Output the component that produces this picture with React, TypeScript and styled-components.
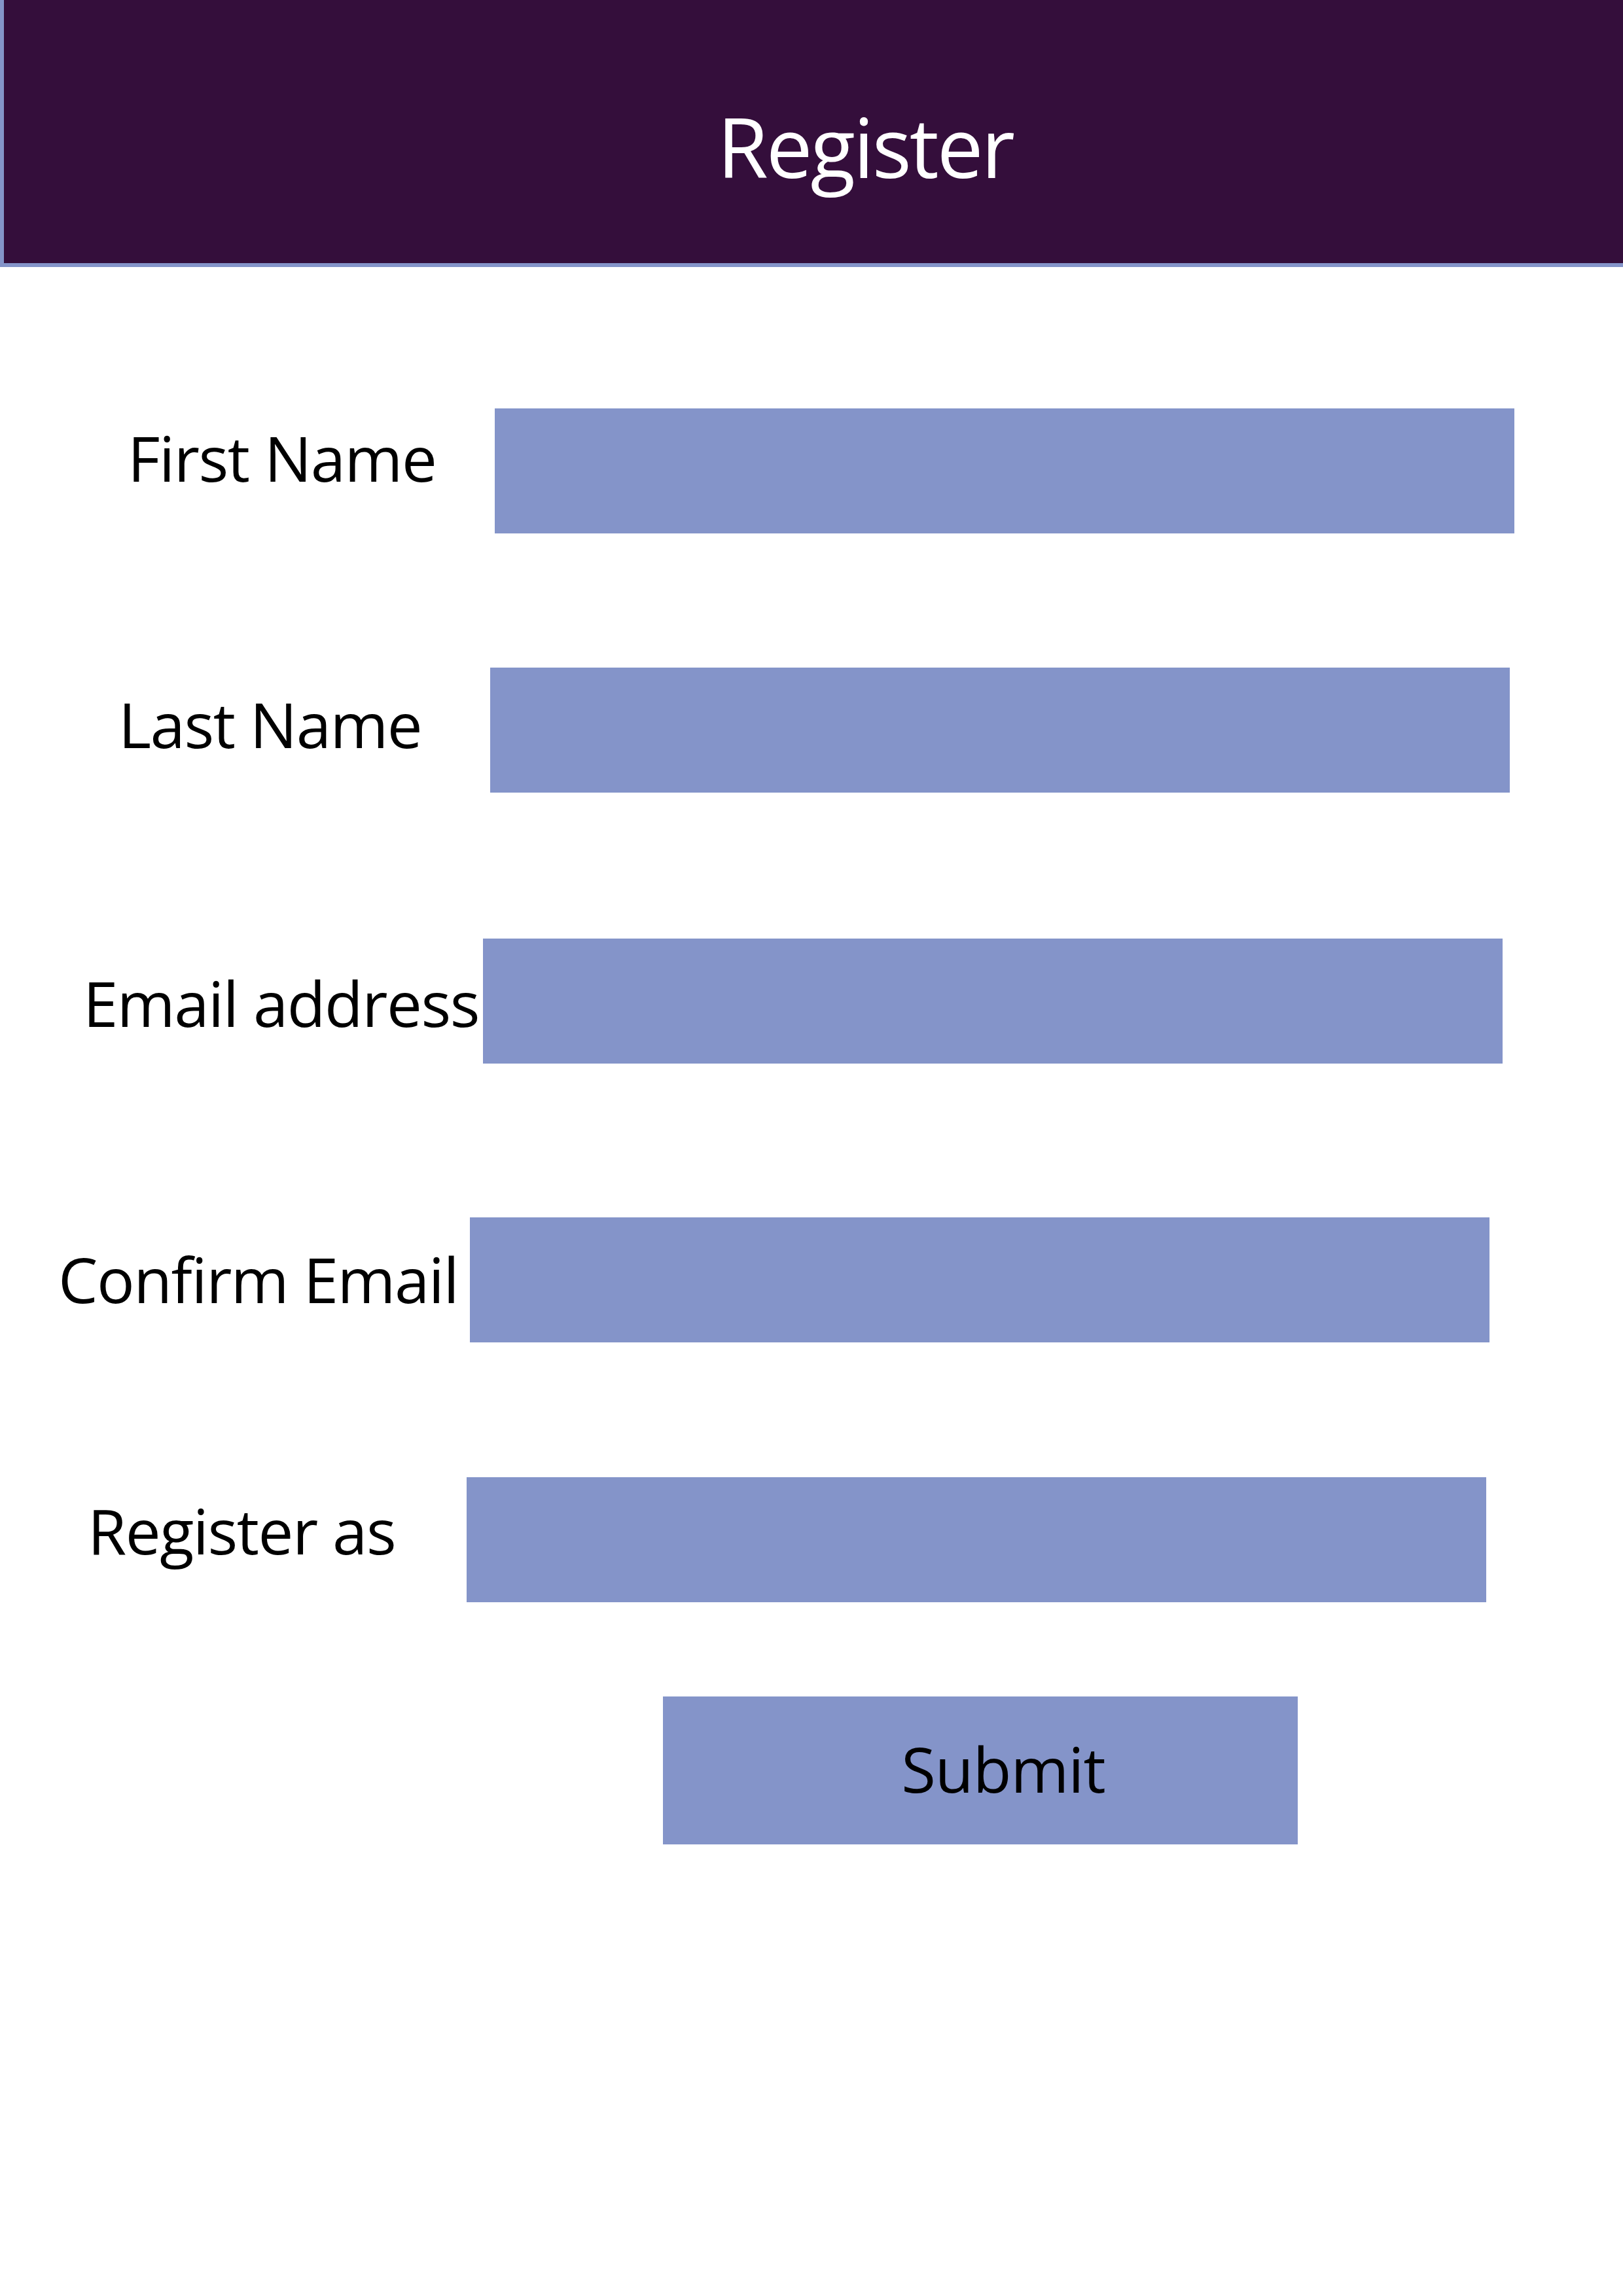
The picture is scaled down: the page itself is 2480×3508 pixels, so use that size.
import styled, { createGlobalStyle } from 'styled-components'

const GlobalStyle = createGlobalStyle`
  html, body {
    margin: 0;
    padding: 0;
    background: #ffffff;
  }

  body {
    width: 2480px;
    min-height: 3508px;
    font-family: 'Open Sans', 'Noto Sans', sans-serif;
  }
`

interface RowProps {
  top: number
  fieldX: number
  labelX: number
  shift: number
}

const Header = styled.header`
  display: flex;
  align-items: center;
  justify-content: center;
  box-sizing: border-box;
  height: 408px;
  padding: 44px 0 0 158px;
  background-color: #340e3b;
  border-left: 6px solid #8494c9;
  border-bottom: 6px solid #8494c9;

  h1 {
    margin: 0;
    font-size: 126px;
    font-weight: 400;
    color: #ffffff;
    letter-spacing: -3px;
  }
`

const Form = styled.form`
  display: flex;
  flex-direction: column;
`

const Row = styled.div<RowProps>`
  display: grid;
  grid-template-columns: ${({ fieldX }) => fieldX}px 1558px;
  align-items: center;
  margin-top: ${({ top }) => top}px;

  label {
    padding-left: ${({ labelX }) => labelX}px;
    margin-top: ${({ shift }) => shift}px;
    font-size: 96px;
    line-height: 1;
    color: #000000;
    white-space: nowrap;
    letter-spacing: -1.5px;
  }
`

const Field = styled.input`
  box-sizing: border-box;
  height: 191px;
  width: 100%;
  margin: 0;
  padding: 0 30px;
  border: 0;
  background-color: #8494c9;
  font-family: inherit;
  font-size: 80px;
  outline: none;
`

const Actions = styled.div`
  display: flex;
  padding-left: 1013px;
  margin-top: 144px;
`

const Submit = styled.button`
  width: 970px;
  height: 226px;
  padding: 0 0 8px 70px;
  border: 0;
  background-color: #8494c9;
  color: #000000;
  font-family: 'Open Sans', 'Noto Sans', sans-serif;
  font-size: 96px;
  letter-spacing: -1px;
  cursor: pointer;
`

const fields = [
  { label: 'First Name', top: 216, fieldX: 756, labelX: 195, shift: -42 },
  { label: 'Last Name', top: 205, fieldX: 749, labelX: 181, shift: -20 },
  { label: 'Email address', top: 223, fieldX: 738, labelX: 127, shift: 4 },
  { label: 'Confirm Email', top: 235, fieldX: 718, labelX: 89, shift: -4 },
  { label: 'Register as', top: 206, fieldX: 713, labelX: 134, shift: -30 }
]

export default function App() {
  return (
    <>
      <GlobalStyle />
      <Header>
        <h1>Register</h1>
      </Header>

      <Form onSubmit={e => e.preventDefault()}>
        {fields.map(({ label, top, fieldX, labelX, shift }) => (
          <Row key={label} top={top} fieldX={fieldX} labelX={labelX} shift={shift}>
            <label>{label}</label>
            <Field type='text' />
          </Row>
        ))}

        <Actions>
          <Submit type='submit'>Submit</Submit>
        </Actions>
      </Form>
    </>
  )
}
